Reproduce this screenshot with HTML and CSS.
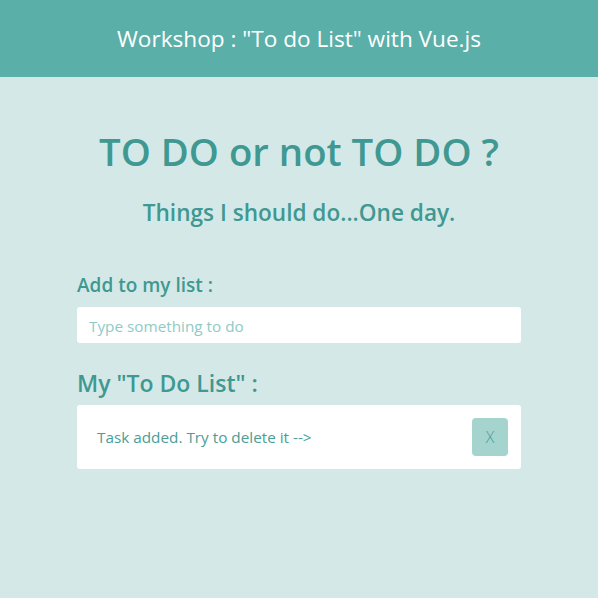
FILE: index.html
```html
<!DOCTYPE html>
<html lang="en">
<head>
<meta charset="utf-8">
<title>Workshop : To do List with Vue.js</title>
<link rel="stylesheet" href="styles.css">
</head>
<body>
<header class="topbar">Workshop : "To do List" with Vue.js</header>
<main class="container">
  <h1 class="title">TO DO or not TO DO ?</h1>
  <h2 class="subtitle">Things I should do...One day.</h2>
  <h3 class="label">Add to my list :</h3>
  <input class="new-task" type="text" placeholder="Type something to do">
  <h2 class="list-title">My "To Do List" :</h2>
  <ul class="tasks">
    <li class="task">
      <span class="task-text">Task added. Try to delete it --&gt;</span>
      <button class="delete" type="button">X</button>
    </li>
  </ul>
</main>
</body>
</html>
```
FILE: styles.css
```css
* { box-sizing: border-box; }
html, body {
  margin: 0;
  padding: 0;
  height: 100%;
}
body {
  background: #d4e9e7;
  font-family: "Open Sans", "Noto Sans", sans-serif;
  color: #3f9891;
}
.topbar {
  height: 77px;
  padding-top: 1px;
  background: #5aafa9;
  color: #ffffff;
  font-size: 22.6px;
  line-height: 76px;
  text-align: center;
}
.container {
  width: 444px;
  margin: 0 auto;
  padding-top: 52px;
}
.title {
  margin: 0;
  font-size: 38.3px;
  line-height: 44px;
  font-weight: 600;
  text-align: center;
}
.subtitle {
  margin: 26px 0 0;
  font-size: 22.6px;
  line-height: 28px;
  font-weight: 600;
  text-align: center;
}
.label {
  margin: 46px 0 0;
  font-size: 19px;
  line-height: 24px;
  font-weight: 600;
}
.new-task {
  display: block;
  width: 100%;
  height: 36px;
  margin: 10px 0 0;
  padding: 2px 12px 0;
  border: none;
  border-radius: 3px;
  background: #ffffff;
  font-family: inherit;
  font-size: 15.3px;
  color: #3f9891;
  outline: none;
}
.new-task::placeholder {
  color: #8ecbc6;
  opacity: 1;
}
.list-title {
  margin: 26px 0 0;
  font-size: 23px;
  line-height: 28px;
  font-weight: 600;
}
.tasks {
  list-style: none;
  margin: 8px 0 0;
  padding: 0;
}
.task {
  display: flex;
  align-items: center;
  justify-content: space-between;
  height: 64px;
  padding: 0 13px 0 20px;
  background: #ffffff;
  border-radius: 3px;
}
.task-text {
  font-size: 15.3px;
  line-height: 20px;
  color: #4a9e98;
}
.delete {
  width: 36px;
  height: 38px;
  border: none;
  border-radius: 4px;
  background: #a5d4cf;
  color: #4a9e98;
  font-family: inherit;
  font-size: 16px;
  font-weight: 300;
  padding: 0;
}
```
